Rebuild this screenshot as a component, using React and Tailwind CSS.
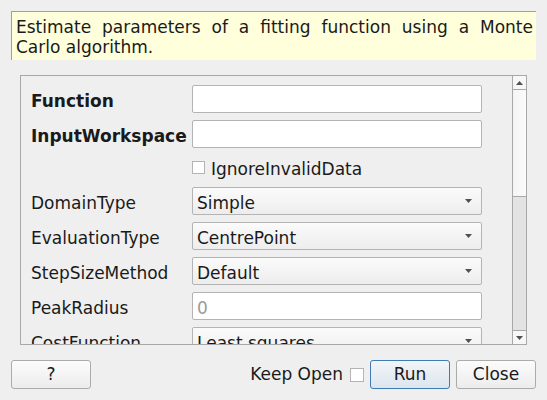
import { useState } from 'react'

const rows = [
  { label: 'Function', bold: true, kind: 'text', value: '' },
  { label: 'InputWorkspace', bold: true, kind: 'text', value: '' },
  { label: '', kind: 'check', value: 'IgnoreInvalidData' },
  { label: 'DomainType', kind: 'combo', value: 'Simple' },
  { label: 'EvaluationType', kind: 'combo', value: 'CentrePoint' },
  { label: 'StepSizeMethod', kind: 'combo', value: 'Default' },
  { label: 'PeakRadius', kind: 'text', placeholder: '0' },
  { label: 'CostFunction', kind: 'combo', value: 'Least squares' },
]

function Arrow({ up }) {
  return (
    <svg width="7" height="4" viewBox="0 0 7 4" className="block">
      <path d={up ? 'M0 4 L3.5 0 L7 4 Z' : 'M0 0 L7 0 L3.5 4 Z'} fill="#505050" />
    </svg>
  )
}

function Field({ row }) {
  if (row.kind === 'check') {
    return (
      <div className="flex items-center gap-[6px] h-[25px]">
        <span className="w-[13px] h-[13px] border border-[#b4b4b4] bg-white" />
        <span className="pt-[2px] leading-[20px]">{row.value}</span>
      </div>
    )
  }
  if (row.kind === 'combo') {
    return (
      <div className="w-[290px] h-[28px] border border-[#b4b4b4] rounded-[2px] bg-gradient-to-b from-[#fbfbfb] to-[#ededed] flex items-center justify-between pl-[4px] pr-[9px]">
        <span className="pt-[3px] leading-[20px]">{row.value}</span>
        <Arrow />
      </div>
    )
  }
  return (
    <div className="w-[290px] h-[28px] border border-[#b4b4b4] rounded-[2px] bg-white flex items-center pl-[4px]">
      <span className="pt-[3px] leading-[20px] text-[#9a9a9a]">{row.placeholder}</span>
    </div>
  )
}

export default function App() {
  const [keepOpen, setKeepOpen] = useState(false)

  return (
    <div
      className="w-[547px] h-[400px] bg-[#efefef] text-[#1a1a1a] text-[17px] pt-[11px] px-[11px] overflow-hidden"
      style={{ fontFamily: '"DejaVu Sans", sans-serif' }}
    >
      <div className="h-[49px] w-[525px] bg-[#ffffdc] border-t border-l border-[#a0a0a0] pl-[4px] pr-[3px] pt-[5px] leading-[20px] text-justify">
        Estimate parameters of a fitting function using a Monte Carlo algorithm.
      </div>

      <div className="mt-[15px] ml-[9px] w-[507px] h-[270px] border border-[#a8a8a8] flex">
        <div className="flex-1 overflow-hidden pl-[10px] pt-[9px]">
          <div className="grid grid-cols-[161px_290px] gap-y-[7px] items-center">
            {rows.map((row, i) => (
              <div key={i} className="contents">
                <div
                  className={
                    row.bold
                      ? 'font-bold whitespace-nowrap pt-[3px] leading-[20px]'
                      : 'whitespace-nowrap pt-[3px] leading-[20px]'
                  }
                >
                  {row.label}
                </div>
                <Field row={row} />
              </div>
            ))}
          </div>
        </div>
        <div className="w-[14px] border-l border-[#a8a8a8] flex flex-col">
          <div className="h-[14px] border-b border-[#a8a8a8] bg-[#f7f7f7] flex items-center justify-center">
            <Arrow up />
          </div>
          <div className="h-[107px] border-b border-[#a8a8a8] bg-gradient-to-r from-[#f4f4f4] to-[#fbfbfb]" />
          <div className="flex-1 bg-[#e3e3e3]" />
          <div className="h-[14px] border-t border-[#a8a8a8] bg-[#f7f7f7] flex items-center justify-center">
            <Arrow />
          </div>
        </div>
      </div>

      <div className="mt-[15px] flex items-center h-[29px]">
        <button className="w-[80px] h-[29px] border border-[#ababab] rounded-[3px] bg-gradient-to-b from-[#fcfcfc] to-[#ececec]">
          ?
        </button>
        <div className="flex-1" />
        <span className="mr-[7px]">Keep Open</span>
        <span
          onClick={() => setKeepOpen(!keepOpen)}
          className="w-[14px] h-[14px] border border-[#b4b4b4] bg-white mr-[6px]"
        />
        <button className="w-[80px] h-[29px] border border-[#3f7cb6] rounded-[3px] bg-gradient-to-b from-[#f2f5f8] to-[#dde5ee] mr-[6px]">
          Run
        </button>
        <button className="w-[80px] h-[29px] border border-[#ababab] rounded-[3px] bg-gradient-to-b from-[#fcfcfc] to-[#ececec]">
          Close
        </button>
      </div>
    </div>
  )
}
